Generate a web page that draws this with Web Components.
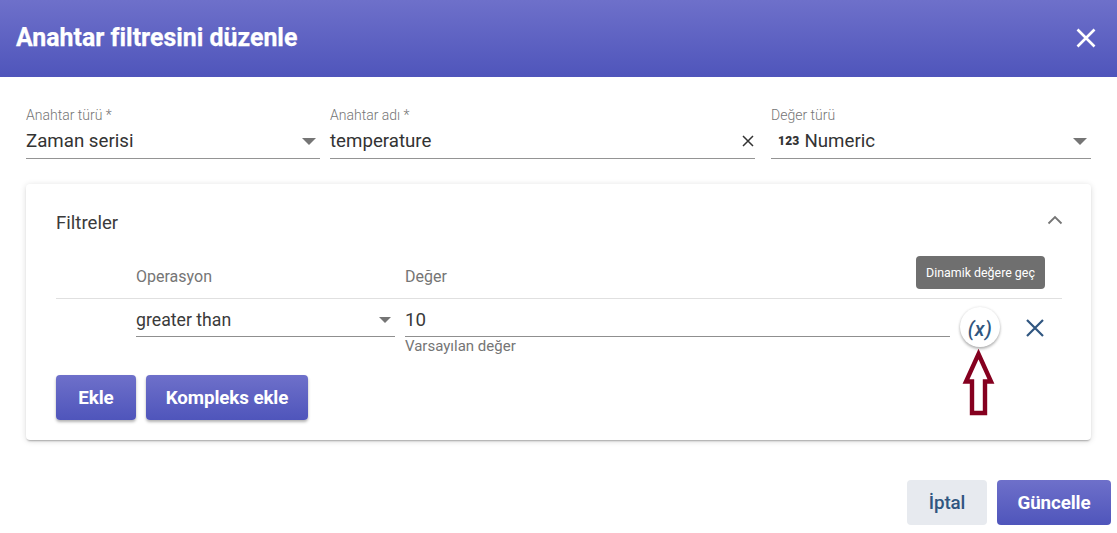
<!DOCTYPE html>
<html lang="tr"><head><meta charset="utf-8"><title>Anahtar filtresini düzenle</title>
<style>
html,body{margin:0;padding:0;background:#fff;width:1117px;height:533px;overflow:hidden;font-family:Roboto,"Liberation Sans",sans-serif}
</style></head><body>
<edit-dialog></edit-dialog>
<script>
const def=(name,css,html)=>customElements.define(name,class extends HTMLElement{constructor(){super();this.attachShadow({mode:'open'}).innerHTML=`<style>${css}</style>${html}`}});
const caret='<svg width="14" height="7" viewBox="0 0 14 7"><path d="M0 0h14L7 7z" fill="#757575"/></svg>';
def('dlg-header',`:host{display:flex;align-items:center;justify-content:space-between;height:77px;padding:0 21px 0 16px;box-sizing:border-box;background:linear-gradient(#6e70ca,#4f55bb);color:#fff}
.t{font:700 24.9px/32px Roboto,sans-serif;position:relative;top:-1px;-webkit-text-stroke:.25px #fff}
svg{display:block;position:relative;top:-1px}`,
`<div class="t">Anahtar filtresini düzenle</div><svg width="20" height="20" viewBox="0 0 20 20"><path d="M1.5 1.5l17 17M18.5 1.5l-17 17" stroke="#fff" stroke-width="2.6" fill="none"/></svg>`);
def('key-field',`:host{display:block;box-sizing:border-box;height:52px;border-bottom:1px solid #949494;position:relative}
.l{font:300 14px/16px Roboto,sans-serif;color:#757575;height:16px}
.v{display:flex;align-items:center;justify-content:space-between;font:18.7px/24px Roboto,sans-serif;color:#333;height:24px;margin-top:6px}
.s{display:flex;align-items:center}`,
`<div class="l"><slot name="label"></slot></div><div class="v"><div class="s"><slot></slot></div><slot name="end"></slot></div>`);
def('filter-card',`:host{display:block;height:256px;box-sizing:border-box;padding:0 29px 0 30px;border-radius:4px;background:#fff;box-shadow:0 2px 2px -1px rgba(0,0,0,.3),0 1px 6px rgba(0,0,0,.14)}
.h{display:flex;justify-content:space-between;align-items:center;height:78px;font:18.6px/24px Roboto,sans-serif;color:#3b3b3b}
svg{display:block;margin-right:-1px;position:relative;top:-3px}
.cols{display:flex;height:37px;padding:5px 0 0 80px;border-bottom:1px solid #e0e0e0;font:16px/20px Roboto,sans-serif;color:#757575;box-sizing:border-box;align-items:flex-start}
.cols div:first-child{width:269px}
.row{display:flex;padding-left:80px;height:76px;position:relative}
.btns{display:flex;gap:10px}`,
`<div class="h"><span>Filtreler</span><svg width="16" height="10" viewBox="0 0 16 10"><path d="M1.5 8.5L8 2l6.5 6.500" fill="none" stroke="#757575" stroke-width="1.800"/></svg></div>
<div class="cols"><div>Operasyon</div><div>Değer</div></div>
<div class="row"><slot name="row"></slot></div><div class="btns"><slot name="btn"></slot></div>`);
def('filter-row',`:host{display:flex;width:100%;align-items:flex-start}
.sel{box-sizing:border-box;width:259px;height:38px;border-bottom:1px solid #8f8f8f;display:flex;justify-content:space-between;align-items:center;font:17.7px/24px Roboto,sans-serif;color:#3a3a3a;padding:4px 4px 0 0}
.val{margin-left:10px;width:545px}
.in{box-sizing:border-box;height:38px;border-bottom:1px solid #8f8f8f;font:18.7px/24px Roboto,sans-serif;color:#3a3a3a;padding-top:9px}
.hint{font:15px/18px Roboto,sans-serif;color:#757575}
.fab{width:40px;height:40px;border-radius:50%;background:#fff;box-shadow:0 2px 3px rgba(0,0,0,.28),0 0 3px rgba(0,0,0,.1);margin:8px 0 0 10px;display:flex;align-items:center;justify-content:center;font:italic 500 20px/1 Roboto,sans-serif;letter-spacing:.4px;color:#305680;flex:none}
.fab span{position:relative;top:2px}
.x{margin:19px 0 0 25px;display:block}`,
`<div class="sel"><span>greater than</span>${caret.replace('width="14" height="7"','width="12" height="6"')}</div>
<div class="val"><div class="in">10</div><div class="hint">Varsayılan değer</div></div>
<div class="fab"><span>(x)</span></div>
<svg class="x" width="20" height="20" viewBox="0 0 20 20"><path d="M2 2l16 16M18 2L2 18" stroke="#305680" stroke-width="2.200" fill="none"/></svg>`);
def('tb-button',`:host{display:inline-flex;align-items:center;justify-content:center;box-sizing:border-box;height:45px;border-radius:4px;font:700 18.8px/24px Roboto,sans-serif;letter-spacing:-.1px;color:#fff;background:linear-gradient(#6e70ca,#4f55bb);box-shadow:0 2px 3px rgba(0,0,0,.3)}
:host([flat]){background:#e7eaef;color:#305680;box-shadow:none;font-weight:500}
:host([foot]){box-shadow:none}`,`<slot></slot>`);
def('edit-dialog',`:host{display:block;position:relative;width:1117px;height:533px}
.f{display:flex;padding:30px 26px 0;height:82px;box-sizing:border-box}
.card{padding:25px 26px 0}
.foot{display:flex;justify-content:flex-end;gap:10px;padding:40px 6px 0 0}
.tip{position:absolute;left:916px;top:256px;width:129px;height:33px;border-radius:4px;background:#6f6f6f;color:#fff;font:12.4px/33px Roboto,sans-serif;text-align:center;white-space:nowrap}
.arrow{position:absolute;left:958px;top:345px;display:block}
.num{font:900 12px/1 Roboto,sans-serif;color:#333;margin:0 5px 0 7px;letter-spacing:.2px}`,
`<dlg-header></dlg-header>
<div class="f">
<key-field style="width:294px"><span slot="label">Anahtar türü *</span>Zaman serisi<span slot="end" style="display:flex;margin-right:4px">${caret}</span></key-field>
<key-field style="width:425px;margin-left:10px"><span slot="label">Anahtar adı *</span>temperature<svg slot="end" style="display:block;margin-right:1px" width="12" height="12" viewBox="0 0 12 12"><path d="M1 1l10 10M11 1L1 11" stroke="#333" stroke-width="1.500" fill="none"/></svg></key-field>
<key-field style="width:320px;margin-left:16px"><span slot="label">Değer türü</span><span class="num">123</span>Numeric<span slot="end" style="display:flex;margin-right:4px">${caret}</span></key-field>
</div>
<div class="card"><filter-card>
<filter-row slot="row"></filter-row>
<tb-button slot="btn" style="width:80px">Ekle</tb-button>
<tb-button slot="btn" style="width:162px">Kompleks ekle</tb-button>
</filter-card></div>
<div class="foot"><tb-button flat style="width:80px">İptal</tb-button><tb-button foot style="width:114px">Güncelle</tb-button></div>
<div class="tip">Dinamik değere geç</div>
<svg class="arrow" width="40" height="74" viewBox="0 0 40 74"><path d="M20.500 9L33 36.500H27V68H14V36.500H8z" fill="#fff" stroke="#85001f" stroke-width="4.400"/></svg>`);
</script>
</body></html>
